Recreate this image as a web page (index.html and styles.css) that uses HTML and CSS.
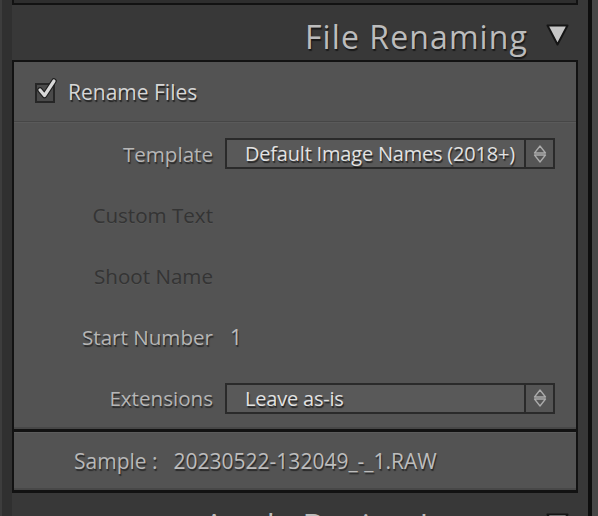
FILE: index.html
```html
<!DOCTYPE html>
<html>
<head>
<meta charset="utf-8">
<link rel="stylesheet" href="styles.css">
</head>
<body>
<div class="app">
  <div class="gutter"></div>
  <div class="main">
    <div class="prev"></div>
    <div class="header">
      <span class="header-title">File Renaming</span>
      <svg class="tri" width="23" height="22" viewBox="0 0 23 22"><polygon points="1.5,1.5 21.5,1.5 11.5,20.5" fill="#c6c6c6" stroke="#151515" stroke-width="2" stroke-linejoin="round"/></svg>
    </div>
    <div class="panel">
      <div class="rename-row">
        <span class="checkbox">
          <svg class="check" width="24" height="24" viewBox="0 0 24 24"><path d="M4 12 L8.5 17.5 L18 3" fill="none" stroke="#1e1e1e" stroke-width="5.5" stroke-linecap="round" stroke-linejoin="round"/><path d="M4 12 L8.5 17.5 L18 3" fill="none" stroke="#d8d8d8" stroke-width="3.2" stroke-linecap="round" stroke-linejoin="round"/></svg>
        </span>
        <span class="rename-label">Rename Files</span>
      </div>
      <div class="settings">
        <div class="row">
          <span class="label">Template</span>
          <div class="select">
            <span class="select-value">Default Image Names (2018+)</span>
            <span class="select-arrow"><svg width="14" height="20" viewBox="0 0 14 20"><path d="M7 2 L12.5 9 L1.5 9 Z M1.5 11 L12.5 11 L7 18 Z" fill="none" stroke="#ababab" stroke-width="1.3" stroke-linejoin="round"/></svg></span>
          </div>
        </div>
        <div class="row">
          <span class="label disabled">Custom Text</span>
        </div>
        <div class="row">
          <span class="label disabled">Shoot Name</span>
        </div>
        <div class="row">
          <span class="label">Start Number</span>
          <span class="value">1</span>
        </div>
        <div class="row">
          <span class="label">Extensions</span>
          <div class="select">
            <span class="select-value">Leave as-is</span>
            <span class="select-arrow"><svg width="14" height="20" viewBox="0 0 14 20"><path d="M7 2 L12.5 9 L1.5 9 Z M1.5 11 L12.5 11 L7 18 Z" fill="none" stroke="#ababab" stroke-width="1.3" stroke-linejoin="round"/></svg></span>
          </div>
        </div>
      </div>
      <div class="sample">
        <span class="sample-label">Sample :</span>
        <span class="sample-value">20230522-132049_-_1.RAW</span>
      </div>
    </div>
    <div class="header header-next">
      <span class="header-title">Apply During Import</span>
      <svg class="tri" width="23" height="22" viewBox="0 0 23 22"><polygon points="1.5,1.5 21.5,1.5 11.5,20.5" fill="#c6c6c6" stroke="#151515" stroke-width="2" stroke-linejoin="round"/></svg>
    </div>
  </div>
  <div class="scroll"></div>
</div>
</body>
</html>
```
FILE: styles.css
```css
html, body {
  margin: 0;
  padding: 0;
}
body {
  width: 598px;
  height: 516px;
  overflow: hidden;
  background: #333333;
  font-family: "Open Sans", "Noto Sans", sans-serif;
}
.app {
  display: flex;
  height: 516px;
  overflow: hidden;
}
.gutter {
  width: 12px;
  flex: none;
  background: linear-gradient(to right, #3d3d3d 0, #3d3d3d 2px, #303030 2px);
}
.main {
  width: 576px;
  height: 516px;
  overflow: hidden;
  flex: none;
  padding-right: 10px;
  box-sizing: border-box;
  background: #383838;
  display: flex;
  flex-direction: column;
}
.scroll {
  width: 10px;
  flex: none;
  background: linear-gradient(to right, #0e0e0e 0, #0e0e0e 4px, #474747 4px);
}
.prev {
  height: 5px;
  flex: none;
  box-sizing: border-box;
  border: 2px solid #121212;
  border-top: 0;
  background: #2e2e2e;
}
.header {
  height: 55px;
  flex: none;
  display: flex;
  align-items: flex-start;
  justify-content: flex-end;
  padding-right: 9px;
}
.header-next {
  margin-top: 1px;
}
.header-title {
  font-size: 32px;
  line-height: 40px;
  margin-top: 12px;
  color: #bcbcbc;
  letter-spacing: 1.1px;
  text-shadow: 1px 2px 1px rgba(0,0,0,0.55);
}
.tri {
  margin-left: 18px;
  margin-top: 19px;
}
.panel {
  flex: none;
  border: 2px solid #121212;
  border-bottom-width: 3px;
  background: #535353;
}
.rename-row {
  height: 59px;
  display: flex;
  align-items: center;
  border-bottom: 1px solid #464646;
  box-shadow: 0 1px 0 #5a5a5a;
}
.checkbox {
  position: relative;
  width: 20px;
  height: 20px;
  box-sizing: border-box;
  margin-left: 21px;
  margin-top: 2px;
  border: 2px solid #262626;
  background: #4a4a4a;
}
.check {
  position: absolute;
  left: -1px;
  top: -7px;
}
.rename-label {
  margin-left: 13px;
  font-size: 21px;
  color: #d6d6d6;
  text-shadow: 1px 2px 1px rgba(0,0,0,0.6);
}
.settings {
  height: 306px;
  margin-top: 1px;
  box-sizing: border-box;
  border-bottom: 2px solid #474747;
  display: flex;
  flex-direction: column;
}
.row {
  height: 61px;
  flex: none;
  display: flex;
  align-items: center;
}
.row:last-child {
  height: 60px;
  padding-top: 2px;
  box-sizing: border-box;
}
.label {
  width: 199px;
  text-align: right;
  font-size: 20.6px;
  color: #b6b6b6;
  text-shadow: 1px 2px 1px rgba(0,0,0,0.5);
}
.label.disabled {
  color: #343434;
  text-shadow: 0 1px 0 rgba(255,255,255,0.04);
}
.value {
  margin-left: 17px;
  font-size: 21px;
  color: #bcbcbc;
  text-shadow: 1px 2px 1px rgba(0,0,0,0.5);
}
.select {
  margin-left: 12px;
  width: 330px;
  height: 31px;
  box-sizing: border-box;
  border: 2px solid #2a2a2a;
  display: flex;
  background: #595959;
}
.select-value {
  flex: 1;
  padding-left: 18px;
  font-size: 20px;
  line-height: 27px;
  color: #e2e2e2;
  text-shadow: 1px 2px 1px rgba(0,0,0,0.6);
  letter-spacing: -0.2px;
}
.select-arrow {
  width: 27px;
  flex: none;
  border-left: 2px solid #2a2a2a;
  background: #555555;
  display: flex;
  align-items: center;
  justify-content: center;
}
.sample {
  height: 58px;
  border-top: 3px solid #121212;
  display: flex;
  align-items: center;
  background: #535353;
  box-shadow: inset 0 1px 0 #5c5c5c, inset 0 -2px 0 #484848;
}
.sample-label {
  margin-left: 60px;
  font-size: 21px;
  color: #b8b8b8;
  text-shadow: 1px 2px 1px rgba(0,0,0,0.5);
}
.sample-value {
  margin-left: 16px;
  font-size: 21px;
  color: #bdbdbd;
  text-shadow: 1px 2px 1px rgba(0,0,0,0.5);
}
```
